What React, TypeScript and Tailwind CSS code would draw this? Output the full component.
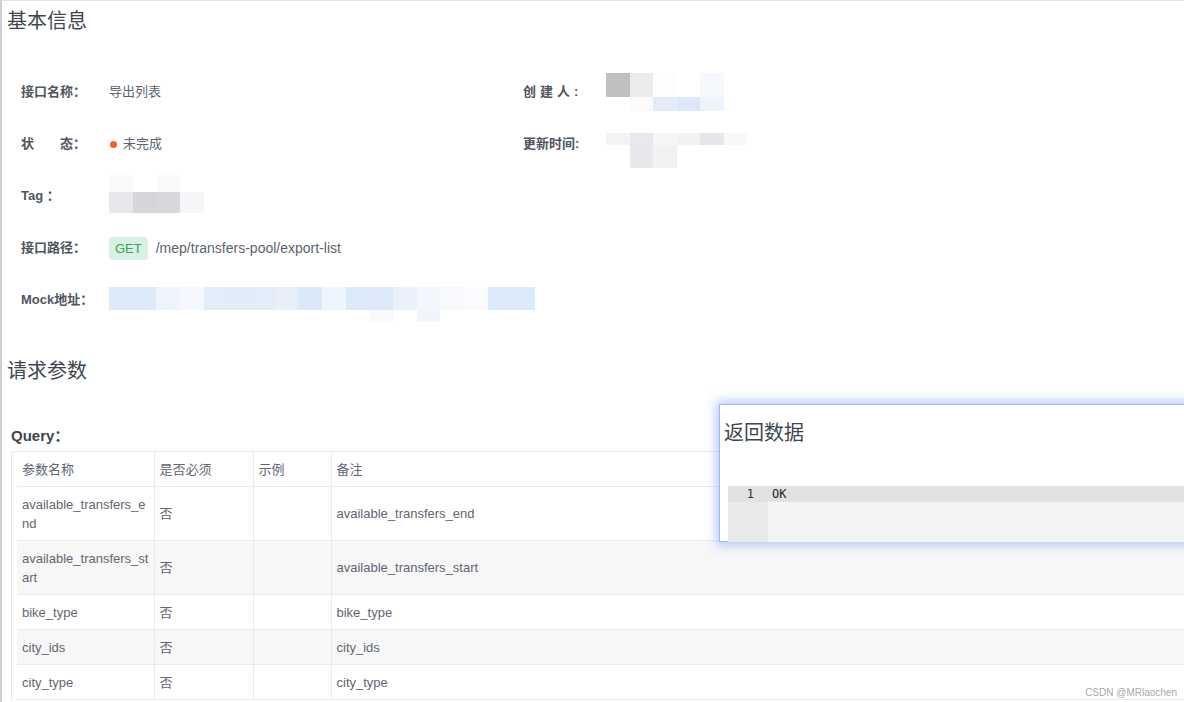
import React from "react";

const font = "font-['Liberation_Sans','Noto_Sans_CJK_SC',sans-serif]";

// pixelated (mosaic) blocks standing in for hidden values
const creatorTop = ["bg-[#bfbfbd]", "bg-[#ebeded]", "bg-[#fdfdfd]", "bg-[#ffffff]", "bg-[#f5f9fe]"];
const creatorBottom = ["bg-[#ffffff]", "bg-[#fbfbfb]", "bg-[#e3edf9]", "bg-[#dbe8f8]", "bg-[#eef4fc]"];
const timeTop = ["bg-[#f3f3f5]", "bg-[#e9e9ed]", "bg-[#f6f6f8]", "bg-[#f2f2f4]", "bg-[#e6e6ea]", "bg-[#f8f8f8]"];
const timeBottom = ["bg-[#ffffff]", "bg-[#e8e8ec]", "bg-[#f1f1f3]", "bg-[#ffffff]", "bg-[#ffffff]", "bg-[#ffffff]"];
const tagTop = ["bg-[#fafafa]", "bg-[#ffffff]", "bg-[#fafafa]", "bg-[#ffffff]"];
const tagBottom = ["bg-[#e8e8ec]", "bg-[#d6d6da]", "bg-[#d8d8dc]", "bg-[#f6f6f8]"];
const mockTop = [
  "bg-[#dce9f8]", "bg-[#dce9f8]", "bg-[#eef4fc]", "bg-[#f5f8fd]", "bg-[#e3edf9]", "bg-[#e1ecf9]",
  "bg-[#e3edf9]", "bg-[#e6effa]", "bg-[#dbe8f8]", "bg-[#eff5fc]", "bg-[#dce9f8]", "bg-[#dde9f8]",
  "bg-[#eaf1fb]", "bg-[#f3f7fd]", "bg-[#f7f9fd]", "bg-[#fafbfe]", "bg-[#dce9f8]", "bg-[#dce9f8]",
];
const mockBottom = mockTop.map((_, i) =>
  i === 11 ? "bg-[#fafafc]" : i === 13 ? "bg-[#f1f5fb]" : "bg-[#ffffff]"
);

function Mosaic({ top, bottom, cols, topH, bottomH, width }: {
  top: string[]; bottom: string[]; cols: string; topH: string; bottomH: string; width: string;
}) {
  return (
    <div className={`flex flex-col ${width}`}>
      <div className={`grid ${cols} ${topH}`}>
        {top.map((c, i) => <div key={i} className={c} />)}
      </div>
      <div className={`grid ${cols} ${bottomH}`}>
        {bottom.map((c, i) => <div key={i} className={c} />)}
      </div>
    </div>
  );
}

const rows = [
  { name: "available_transfers_end", req: "否", ex: "", note: "available_transfers_end" },
  { name: "available_transfers_start", req: "否", ex: "", note: "available_transfers_start" },
  { name: "bike_type", req: "否", ex: "", note: "bike_type" },
  { name: "city_ids", req: "否", ex: "", note: "city_ids" },
  { name: "city_type", req: "否", ex: "", note: "city_type" },
];

const Label: React.FC<{ children: React.ReactNode }> = ({ children }) => (
  <div className="w-[88px] shrink-0 text-[13px] font-bold text-[#50555e]">{children}</div>
);

export default function App() {
  return (
    <div className={`relative w-[1184px] h-[702px] overflow-hidden bg-white border-l-2 border-l-[#cfcfcf] border-t border-t-[#e2e2e2] ${font}`}>
      <h2 className="pl-[5px] mt-[6px] text-[20px] leading-[28px] text-[#3f4652]">基本信息</h2>

      {/* basic info */}
      <div className="mt-[31px] pl-[19px] grid grid-cols-[502px_1fr] auto-rows-[52px]">
        <div className="flex items-center">
          <Label>接口名称：</Label>
          <span className="text-[13px] text-[#5c6370]">导出列表</span>
        </div>
        <div className="flex items-center">
          <div className="w-[83px] shrink-0 text-[13px] font-bold text-[#50555e] tracking-[4px]">创建人:</div>
          <Mosaic top={creatorTop} bottom={creatorBottom} cols="grid-cols-5" topH="h-[24px]" bottomH="h-[14px]" width="w-[118px]" />
        </div>

        <div className="flex items-center">
          <Label>
            <span className="tracking-[26px]">状</span>态：
          </Label>
          <span className="w-[7px] h-[7px] rounded-full bg-[#f0602b] ml-[1px] mr-[6px]" />
          <span className="text-[13px] text-[#5c6370]">未完成</span>
        </div>
        <div className="flex items-center">
          <div className="w-[83px] shrink-0 text-[13px] font-bold text-[#50555e]">更新时间:</div>
          <div className="mt-[12px]">
            <Mosaic top={timeTop} bottom={timeBottom} cols="grid-cols-6" topH="h-[12px]" bottomH="h-[23px]" width="w-[141px]" />
          </div>
        </div>

        <div className="flex items-center col-span-2">
          <Label>Tag ：</Label>
          <div className="-mt-[5px]">
            <Mosaic top={tagTop} bottom={tagBottom} cols="grid-cols-4" topH="h-[17px]" bottomH="h-[21px]" width="w-[95px]" />
          </div>
        </div>

        <div className="flex items-center col-span-2">
          <Label>接口路径：</Label>
          <span className="h-[23px] px-[6px] rounded-[4px] bg-[#d8f1e2] text-[#3aa55a] text-[13px] leading-[23px] mr-[8px]">GET</span>
          <span className="text-[14px] text-[#5c6370]">/mep/transfers-pool/export-list</span>
        </div>

        <div className="flex items-center col-span-2">
          <Label>Mock地址：</Label>
          <div className="mt-[9px]">
            <Mosaic top={mockTop} bottom={mockBottom} cols="grid-cols-[repeat(18,1fr)]" topH="h-[23px]" bottomH="h-[12px]" width="w-[426px]" />
          </div>
        </div>
      </div>

      <h2 className="pl-[5px] mt-[31px] text-[20px] leading-[28px] text-[#3f4652]">请求参数</h2>

      <div className="pl-[9px] mt-[41px] text-[15px] leading-[20px] font-semibold text-[#3f4652]">Query：</div>

      {/* query table */}
      <div className="ml-[9px] mt-[5px] w-[1300px] border-l border-t border-[#e6e6e6] rounded-tl-[4px] pl-[5px]">
        <table className="w-full border-collapse table-fixed text-[13px] leading-[19px] text-[#5f6672]">
          <colgroup>
            <col className="w-[137px]" />
            <col className="w-[99px]" />
            <col className="w-[78px]" />
            <col />
          </colgroup>
          <thead>
            <tr className="border-b border-[#ebebeb]">
              <th className="text-left font-normal px-[5px] py-[7.5px] border-r border-[#ebebeb]">参数名称</th>
              <th className="text-left font-normal px-[5px] py-[7.5px] border-r border-[#ebebeb]">是否必须</th>
              <th className="text-left font-normal px-[5px] py-[7.5px] border-r border-[#ebebeb]">示例</th>
              <th className="text-left font-normal px-[5px] py-[7.5px]">备注</th>
            </tr>
          </thead>
          <tbody>
            {rows.map((r, i) => (
              <tr key={r.name} className={`border-b border-[#ebebeb] ${i % 2 === 1 ? "bg-[#f7f7f7]" : "bg-white"}`}>
                <td className="px-[5px] py-[7.5px] break-all border-r border-[#ebebeb]">{r.name}</td>
                <td className="px-[5px] py-[7.5px] border-r border-[#ebebeb]">{r.req}</td>
                <td className="px-[5px] py-[7.5px] border-r border-[#ebebeb]">{r.ex}</td>
                <td className="px-[5px] py-[7.5px]">{r.note}</td>
              </tr>
            ))}
          </tbody>
        </table>
      </div>

      {/* floating response panel */}
      <div className="absolute left-[717px] top-[403px] w-[480px] h-[138px] bg-white border border-[#9db4ff] shadow-[0_0_10px_3px_rgba(100,140,255,0.45)]">
        <h3 className="pl-[4px] pt-[14px] text-[20px] leading-[28px] text-[#3f4652]">返回数据</h3>
        <div className="mt-[39px] ml-[8px] h-[56px] flex flex-col font-['DejaVu_Sans_Mono',monospace] text-[12px] text-[#222]">
          <div className="flex h-[16px] leading-[16px] bg-[#e1e1e1]">
            <div className="w-[40px] text-right pr-[14px] text-[#333]">1</div>
            <div className="pl-[4px]">OK</div>
          </div>
          <div className="flex flex-1">
            <div className="w-[40px] bg-[#e9e9e9]" />
            <div className="flex-1 bg-[#f3f3f3]" />
          </div>
        </div>
      </div>

      <div className="absolute right-[7px] bottom-[2px] text-[10px] text-[#a8a8a8]">CSDN @MRlaochen</div>
    </div>
  );
}
